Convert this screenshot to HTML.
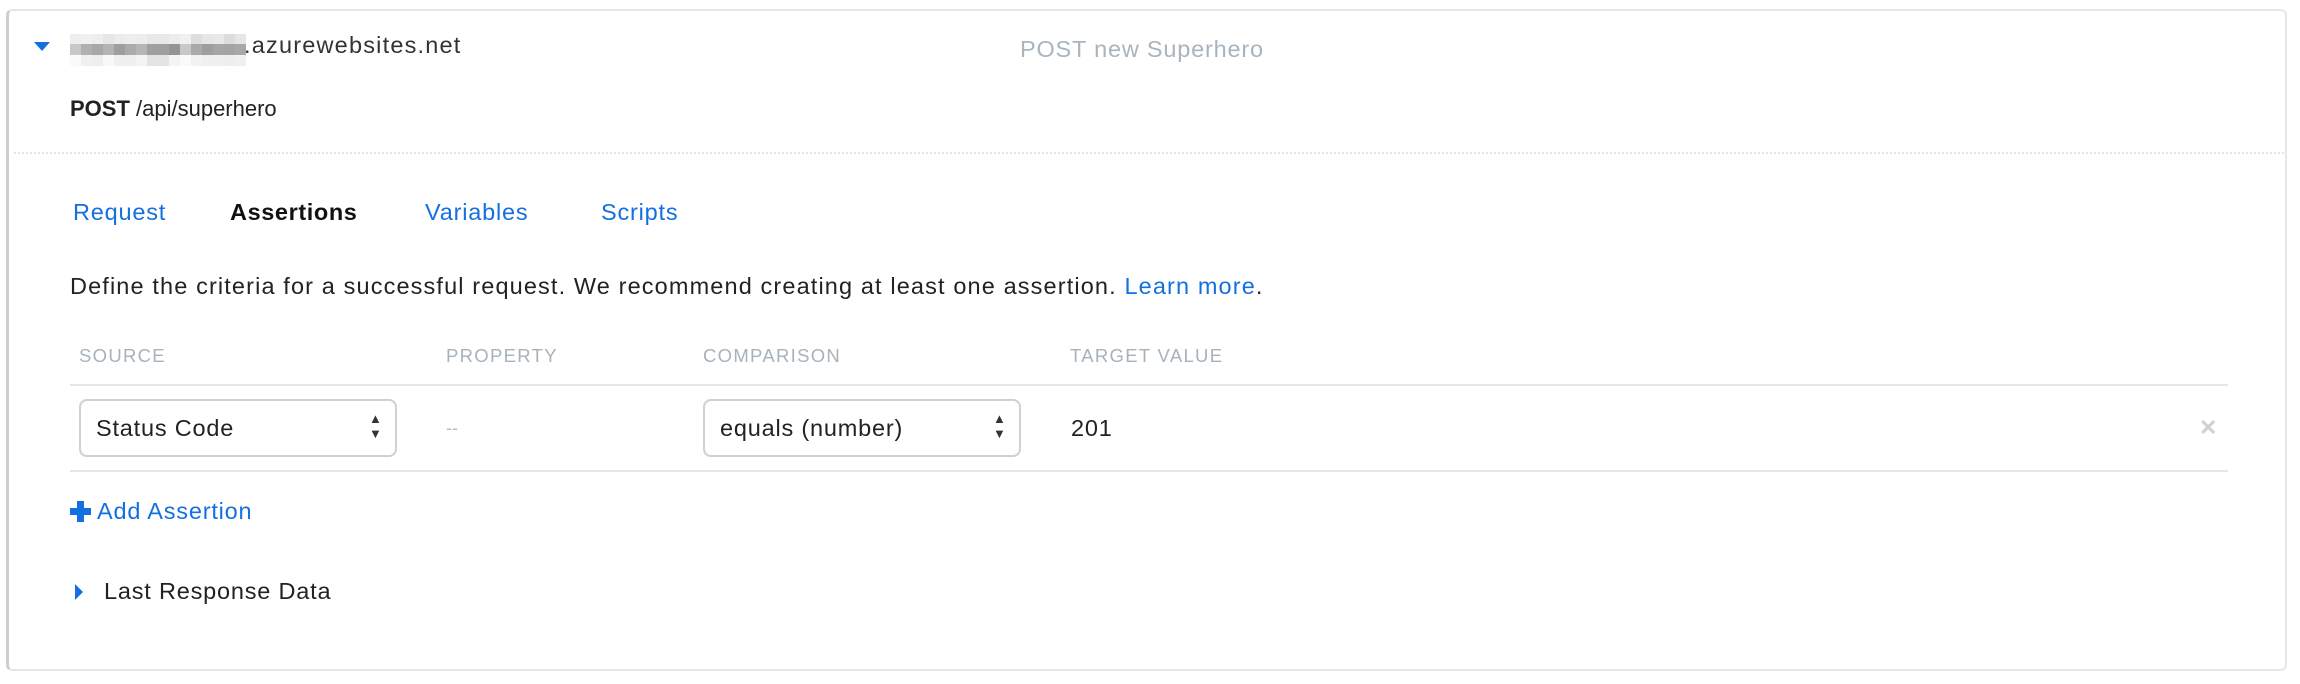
<!DOCTYPE html>
<html><head><meta charset="utf-8"><style>
body{margin:0;width:2300px;height:684px;background:#fff;font-family:"Liberation Sans",sans-serif;position:relative;overflow:hidden;color:#222}
.a{position:absolute;white-space:nowrap}
.card{position:absolute;left:6px;top:9px;width:2281px;height:662px;border:2px solid #e6e6e6;border-left:3px solid #c9cfd3;border-radius:6px;box-sizing:border-box}
.blue{color:#1470e0}
.hdr{font-size:18.5px;color:#a7b2ba;letter-spacing:1.3px}
.sel{position:absolute;height:58px;border:2px solid #d0d0d0;border-radius:8px;box-sizing:border-box;background:#fff}
.blur{position:absolute;left:70px;top:34px;display:grid;grid-template-columns:repeat(16,11px);grid-template-rows:10px 11px 11px}
.t{font-size:23.5px;letter-spacing:0.8px}
</style></head><body>
<div class="card"></div>
<svg class="a" style="left:34px;top:42px" width="16" height="10"><polygon points="0,0 16,0 8,9" fill="#1470e0"/></svg>
<div class="blur">
<i style="background:#eee"></i><i style="background:#f0f0f0"></i><i style="background:#eee"></i><i style="background:#e6e6e6"></i><i style="background:#ececec"></i><i style="background:#eee"></i><i style="background:#ededed"></i><i style="background:#e8e8e8"></i><i style="background:#e8e8e8"></i><i style="background:#ececec"></i><i style="background:#f0f0f0"></i><i style="background:#dedede"></i><i style="background:#e6e6e6"></i><i style="background:#e8e8e8"></i><i style="background:#dcdcdc"></i><i style="background:#e6e6e6"></i>
<i style="background:#c8c8c8"></i><i style="background:#b0b0b0"></i><i style="background:#a8a8a8"></i><i style="background:#b4b4b4"></i><i style="background:#9e9e9e"></i><i style="background:#ababab"></i><i style="background:#b6b6b6"></i><i style="background:#a0a0a0"></i><i style="background:#a0a0a0"></i><i style="background:#949494"></i><i style="background:#c8c8c8"></i><i style="background:#aaa"></i><i style="background:#9e9e9e"></i><i style="background:#a6a6a6"></i><i style="background:#a4a4a4"></i><i style="background:#a8a8a8"></i>
<i style="background:#fafafa"></i><i style="background:#f0f0f0"></i><i style="background:#eee"></i><i style="background:#f8f8f8"></i><i style="background:#f0f0f0"></i><i style="background:#f0f0f0"></i><i style="background:#f4f4f4"></i><i style="background:#e4e4e4"></i><i style="background:#e4e4e4"></i><i style="background:#f4f4f4"></i><i style="background:#fafafa"></i><i style="background:#f2f2f2"></i><i style="background:#f0f0f0"></i><i style="background:#f0f0f0"></i><i style="background:#eee"></i><i style="background:#f0f0f0"></i>
</div>
<div class="a t" style="left:244px;top:32px;color:#333;letter-spacing:1.2px">.azurewebsites.net</div>
<div class="a t" style="left:1020px;top:36px;color:#a9b4bd">POST new Superhero</div>
<div class="a" style="left:70px;top:96px;font-size:22px;color:#222"><b>POST</b> /api/superhero</div>
<div class="a" style="left:14px;top:152px;width:2270px;border-top:2px dotted #e4e4e4"></div>
<div class="a blue t" style="left:73px;top:199px">Request</div>
<div class="a t" style="left:230px;top:199px;font-weight:bold;color:#111;letter-spacing:0.6px">Assertions</div>
<div class="a blue t" style="left:425px;top:199px">Variables</div>
<div class="a blue t" style="left:601px;top:199px">Scripts</div>
<div class="a" style="left:70px;top:273px;font-size:23.5px;letter-spacing:1.13px;color:#222">Define the criteria for a successful request. We recommend creating at least one assertion. <span class="blue">Learn more</span>.</div>
<div class="a hdr" style="left:79px;top:345px">SOURCE</div>
<div class="a hdr" style="left:446px;top:345px">PROPERTY</div>
<div class="a hdr" style="left:703px;top:345px">COMPARISON</div>
<div class="a hdr" style="left:1070px;top:345px">TARGET VALUE</div>
<div class="a" style="left:70px;top:384px;width:2158px;border-top:2px solid #e6e6e6"></div>
<div class="sel" style="left:79px;top:399px;width:318px"></div>
<div class="a t" style="left:96px;top:415px;color:#222">Status Code</div>
<div class="a" style="left:369px;top:411px;font-size:13px;line-height:15px;color:#333">▲<br>▼</div>
<div class="a" style="left:446px;top:418px;font-size:18px;color:#bbb">--</div>
<div class="sel" style="left:703px;top:399px;width:318px"></div>
<div class="a t" style="left:720px;top:415px;color:#222">equals (number)</div>
<div class="a" style="left:993px;top:411px;font-size:13px;line-height:15px;color:#333">▲<br>▼</div>
<div class="a t" style="left:1071px;top:415px;color:#222">201</div>
<div class="a" style="left:2199px;top:415px;font-size:22px;font-weight:bold;color:#d0d0d0">✕</div>
<div class="a" style="left:70px;top:470px;width:2158px;border-top:2px solid #e6e6e6"></div>
<svg class="a" style="left:70px;top:501px" width="21" height="21"><rect x="7" y="0" width="7" height="21" fill="#1470e0"/><rect x="0" y="7" width="21" height="7" fill="#1470e0"/></svg>
<div class="a blue t" style="left:97px;top:498px">Add Assertion</div>
<svg class="a" style="left:75px;top:584px" width="9" height="16"><polygon points="0,0 8,8 0,16" fill="#1470e0"/></svg>
<div class="a t" style="left:104px;top:578px;color:#222">Last Response Data</div>
</body></html>
